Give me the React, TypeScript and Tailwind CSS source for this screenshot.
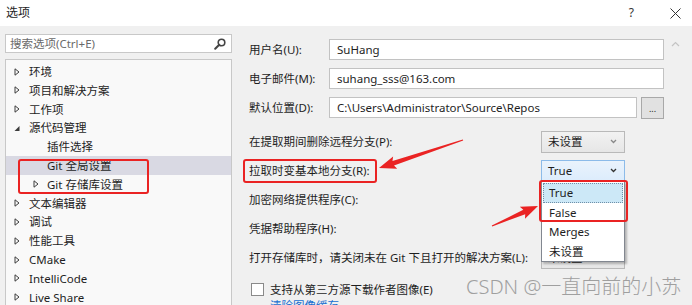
import React from "react";

const FONT = { fontFamily: '"Noto Sans", "Noto Sans CJK SC", sans-serif' };

function arrowPoints(x1: number, y1: number, x2: number, y2: number) {
  const dx = x2 - x1, dy = y2 - y1;
  const L = Math.hypot(dx, dy);
  const ux = dx / L, uy = dy / L;
  const nx = -uy, ny = ux;
  const hl = 15, hw = 6.5, sw = 2.4, tw = 0.5;
  const bx = x2 - ux * hl, by = y2 - uy * hl;
  const wx = bx - ux * 2, wy = by - uy * 2;
  const p = [
    [x1 + nx * tw, y1 + ny * tw],
    [bx + nx * sw, by + ny * sw],
    [wx + nx * hw, wy + ny * hw],
    [x2, y2],
    [wx - nx * hw, wy - ny * hw],
    [bx - nx * sw, by - ny * sw],
    [x1 - nx * tw, y1 - ny * tw],
  ];
  return p.map((q) => q.map((v) => v.toFixed(1)).join(",")).join(" ");
}

function TriRight() {
  return (
    <svg width="6" height="8" viewBox="0 0 6 8" className="shrink-0">
      <path d="M1 0.8 L5 4 L1 7.2 Z" fill="none" stroke="#3c3c3c" strokeWidth="1" />
    </svg>
  );
}
function TriDown() {
  return (
    <svg width="6" height="8" viewBox="0 0 6 8" className="shrink-0">
      <path d="M5.5 2 L5.5 7 L0.5 7 Z" fill="#3c3c3c" />
    </svg>
  );
}

type Node = { label: string; level: number; icon: "r" | "d" | null; selected?: boolean };
const tree: Node[] = [
  { label: "环境", level: 0, icon: "r" },
  { label: "项目和解决方案", level: 0, icon: "r" },
  { label: "工作项", level: 0, icon: "r" },
  { label: "源代码管理", level: 0, icon: "d" },
  { label: "插件选择", level: 1, icon: null },
  { label: "Git 全局设置", level: 1, icon: null, selected: true },
  { label: "Git 存储库设置", level: 1, icon: "r" },
  { label: "文本编辑器", level: 0, icon: "r" },
  { label: "调试", level: 0, icon: "r" },
  { label: "性能工具", level: 0, icon: "r" },
  { label: "CMake", level: 0, icon: "r" },
  { label: "IntelliCode", level: 0, icon: "r" },
  { label: "Live Share", level: 0, icon: "r" },
];

function Chevron({ dark }: { dark?: boolean }) {
  return (
    <svg width="7" height="5" viewBox="0 0 7 5">
      <path d="M1 1 L3.5 3.5 L6 1" fill="none" stroke={dark ? "#333" : "#888"} strokeWidth="1.3" />
    </svg>
  );
}

function Select({ value, open }: { value: string; open?: boolean }) {
  return (
    <div
      className={
        "w-[84px] h-[22px] flex items-center justify-between pl-[6px] pr-[7px] border " +
        (open
          ? "border-[#8cbbe9] bg-gradient-to-b from-[#eaf3fc] to-[#dcecfc]"
          : "border-[#b9b9b9] bg-gradient-to-b from-[#f2f2f2] to-[#e6e6e6]")
      }
    >
      <span>{value}</span>
      <Chevron dark={open} />
    </div>
  );
}

export default function App() {
  return (
    <div
      className="relative w-[692px] h-[305px] overflow-hidden bg-[#f0f0f0] text-[11.5px] text-[#1e1e1e] flex flex-col"
      style={FONT}
    >
      {/* title bar */}
      <div className="h-[26px] bg-white flex items-center shrink-0">
        <span className="pl-[6px] text-[12px]">选项</span>
        <div className="flex-1" />
        <span className="text-[12px] text-[#333] mr-[36px]">?</span>
        <svg width="11" height="11" viewBox="0 0 11 11" className="mr-[11px]">
          <path d="M0.5 0.5 L10.5 10.5 M10.5 0.5 L0.5 10.5" stroke="#333" strokeWidth="1" />
        </svg>
      </div>

      <div className="flex flex-1 min-h-0">
        {/* left */}
        <div className="w-[232px] pl-[5px] pt-[8px] flex flex-col shrink-0">
          <div className="h-[22px] bg-white border border-[#c8c8c8] flex items-center pl-[4px] pr-[5px]">
            <span className="text-[#6a6a6a] flex-1">搜索选项(Ctrl+E)</span>
            <svg width="12" height="12" viewBox="0 0 12 12">
              <circle cx="7.5" cy="4.5" r="3.3" fill="none" stroke="#444" strokeWidth="1.6" />
              <path d="M5.2 6.8 L1.2 10.8" stroke="#444" strokeWidth="2" strokeLinecap="round" />
            </svg>
          </div>
          <div className="mt-[6px] flex-1 bg-[#f9f9f9] border border-[#c8c8c8] border-b-0 pt-[2px]">
            {tree.map((n, i) => (
              <div
                key={i}
                className={
                  "h-[18.8px] flex items-center " + (n.selected ? "bg-[#d9d9e3]" : "")
                }
                style={{ paddingLeft: n.level === 0 ? 8 : 27 }}
              >
                <div className="flex items-center" style={{ width: n.level === 0 ? 15 : 14 }}>
                  {n.icon === "r" ? <TriRight /> : n.icon === "d" ? <TriDown /> : null}
                </div>
                <span>{n.label}</span>
              </div>
            ))}
          </div>
        </div>

        {/* right */}
        <div className="flex-1 pl-[17px] pr-[28px] pt-[13px] flex flex-col">
          <div className="flex items-center h-[21px]">
            <span className="w-[80px]">用户名(U):</span>
            <div className="flex-1 h-[21px] bg-white border border-[#c2c2c2] flex items-center pl-[7px]">SuHang</div>
          </div>
          <div className="flex items-center h-[21px] mt-[8px]">
            <span className="w-[80px]">电子邮件(M):</span>
            <div className="flex-1 h-[21px] bg-white border border-[#c2c2c2] flex items-center pl-[7px]">suhang_sss@163.com</div>
          </div>
          <div className="flex items-center h-[21px] mt-[8px]">
            <span className="w-[80px]">默认位置(D):</span>
            <div className="flex-1 h-[21px] bg-white border border-[#c2c2c2] flex items-center pl-[7px]">
              C:\Users\Administrator\Source\Repos
            </div>
            <div className="ml-[4px] w-[23px] h-[22px] bg-[#e1e1e1] border border-[#a8a8a8] flex items-end justify-center pb-[5px] text-[9px] leading-none">
              ...
            </div>
          </div>

          <div className="mt-[9px] flex flex-col">
            {[
              { l: "在提取期间删除远程分支(P):", v: "未设置" },
              { l: "拉取时变基本地分支(R):", v: "True", open: true },
              { l: "加密网络提供程序(C):", v: "未设置" },
              { l: "凭据帮助程序(H):", v: "未设置" },
              { l: "打开存储库时，请关闭未在 Git 下且打开的解决方案(L):", v: "未设置" },
            ].map((r, i) => (
              <div key={i} className="h-[29px] flex items-center justify-between pr-[39px]">
                <span>{r.l}</span>
                <Select value={r.v} open={r.open} />
              </div>
            ))}
          </div>

          <div className="mt-[9px] h-[18px] flex items-center">
            <div className="w-[13px] h-[13px] bg-white border border-[#8a8a8a] ml-[2px]" />
            <span className="ml-[6px]">支持从第三方源下载作者图像(E)</span>
          </div>
          <div className="pl-[21px] text-[#1a6fd0] leading-[14px] mt-[1px]">清除图像缓存</div>
        </div>
      </div>

      {/* scroll caret */}
      <svg width="9" height="6" viewBox="0 0 9 6" className="absolute left-[671px] top-[41px]">
        <path d="M1 5 L4.5 1.5 L8 5" fill="none" stroke="#c4c4c4" strokeWidth="1.2" />
      </svg>

      {/* dropdown list */}
      <div className="absolute left-[541px] top-[181px] w-[84px] h-[81px] bg-white border border-[#828790] shadow-[2px_2px_2px_rgba(0,0,0,0.25)] pt-[1px] px-[1px]">
        <div className="h-[20px] bg-[#cce8f7] border border-dotted border-[#6f8fa8] flex items-center pl-[5px]">True</div>
        <div className="h-[19px] flex items-center pl-[6px]">False</div>
        <div className="h-[19.5px] flex items-center pl-[6px]">Merges</div>
        <div className="h-[19.5px] flex items-center pl-[6px]">未设置</div>
      </div>

      {/* red annotation boxes */}
      <div className="absolute left-[18px] top-[159px] w-[131px] h-[35px] border-2 border-[#ea2323] rounded-[3px]" />
      <div className="absolute left-[243px] top-[159px] w-[134px] h-[24px] border-2 border-[#ea2323] rounded-[3px]" />
      <div className="absolute left-[539px] top-[180px] w-[89px] h-[42px] border-2 border-[#ea2323] rounded-[3px]" />

      {/* arrows */}
      <svg className="absolute inset-0 pointer-events-none" width="692" height="305" viewBox="0 0 692 305">
        <polygon points={arrowPoints(463, 140, 379, 168)} fill="#ea2323" />
        <polygon points={arrowPoints(492, 226, 538, 206)} fill="#ea2323" />
      </svg>

      {/* watermark */}
      <div
        className="absolute left-[466px] top-[272px] text-[20px] text-[#8c8c8c] opacity-80 whitespace-nowrap font-light"
        style={{ fontFamily: '"Noto Sans", "Noto Sans CJK SC", sans-serif' }}
      >
        CSDN @一直向前的小苏
      </div>
    </div>
  );
}
